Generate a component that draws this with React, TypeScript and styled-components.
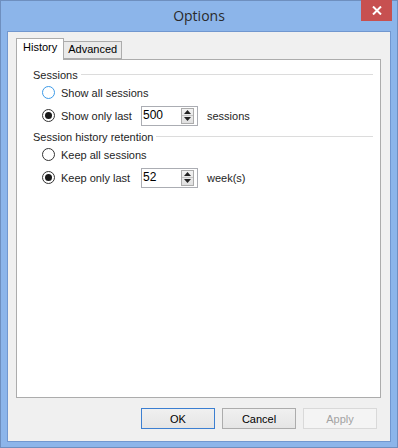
import styled, { createGlobalStyle } from 'styled-components';

const GlobalStyle = createGlobalStyle`
  html, body {
    margin: 0;
    padding: 0;
    background: #8cb5ea;
  }
  * {
    box-sizing: border-box;
  }
`;

const Window = styled.div`
  width: 398px;
  height: 448px;
  background: #8cb5ea;
  border: 1px solid #6e8fbf;
  display: flex;
  flex-direction: column;
  padding: 0 6px 5px 6px;
  font-family: 'Liberation Sans', Arial, sans-serif;
  font-size: 11px;
  color: #1e1e1e;
`;

const TitleBar = styled.div`
  height: 30px;
  display: flex;
  align-items: center;
  justify-content: center;
  position: relative;
`;

const Title = styled.div`
  font-family: 'Open Sans', 'Noto Sans', sans-serif;
  font-size: 14px;
  color: #2a2a2a;
  margin-top: -1px;
`;

const CloseButton = styled.div`
  position: absolute;
  top: -1px;
  right: -1px;
  width: 31px;
  height: 21px;
  background: #c75050;
  display: flex;
  align-items: center;
  justify-content: center;
`;

const Client = styled.div`
  flex: 1;
  background: #f0f0f0;
  border: 1px solid #7197cf;
  display: flex;
  flex-direction: column;
  padding: 6px 9px 0 8px;
`;

const TabStrip = styled.div`
  display: flex;
  align-items: flex-end;
  height: 21px;
  position: relative;
  z-index: 1;
`;

const Tab = styled.div<{ $active?: boolean }>`
  height: ${({ $active }) => ($active ? '22px' : '18px')};
  padding: ${({ $active }) => ($active ? '2px 6px 0 6px' : '1px 4px 0 4px')};
  margin-bottom: ${({ $active }) => ($active ? '-1px' : '0')};
  background: ${({ $active }) => ($active ? '#ffffff' : '#eaeaea')};
  border: 1px solid #acacac;
  border-bottom: ${({ $active }) => ($active ? 'none' : '1px solid #acacac')};
  border-left: ${({ $active }) => ($active ? '1px solid #acacac' : 'none')};
  display: flex;
  align-items: flex-start;
  color: #000;
`;

const Panel = styled.div`
  height: 339px;
  background: #ffffff;
  border: 1px solid #acacac;
  padding: 7px 7px 0 16px;
  display: flex;
  flex-direction: column;
`;

const Group = styled.div`
  display: flex;
  flex-direction: column;
  margin-bottom: 1px;
`;

const GroupHeader = styled.div`
  display: flex;
  align-items: center;
  gap: 3px;
  height: 15px;
`;

const GroupLine = styled.div`
  flex: 1;
  height: 1px;
  background: #dcdcdc;
`;

const Row = styled.div<{ $h: number }>`
  display: flex;
  align-items: center;
  height: ${({ $h }) => $h}px;
  padding-left: 9px;
`;

const Radio = styled.div<{ $checked?: boolean; $focus?: boolean }>`
  width: 13px;
  height: 13px;
  border-radius: 50%;
  border: 1px solid ${({ $focus }) => ($focus ? '#3c9ae8' : '#333333')};
  background: #ffffff;
  display: flex;
  align-items: center;
  justify-content: center;
  margin-right: 6px;
  flex-shrink: 0;

  &::after {
    content: '';
    display: ${({ $checked }) => ($checked ? 'block' : 'none')};
    width: 7px;
    height: 7px;
    border-radius: 50%;
    background: #1a1a1a;
  }
`;

const RadioLabel = styled.span`
  width: 80px;
  white-space: nowrap;
`;

const SpinBox = styled.div`
  width: 57px;
  height: 20px;
  border: 1px solid #abadb3;
  background: #fff;
  display: flex;
  align-items: stretch;
  padding: 1px 3px 1px 1px;
  margin-right: 9px;
`;

const SpinValue = styled.div`
  flex: 1;
  font-size: 12px;
  line-height: 15px;
  color: #000;
`;

const SpinButtons = styled.div`
  width: 13px;
  display: flex;
  flex-direction: column;
  border: 1px solid #acacac;
  background: linear-gradient(#f2f2f2, #e0e0e0);
`;

const SpinHalf = styled.div<{ $top?: boolean }>`
  flex: 1;
  display: flex;
  align-items: center;
  justify-content: center;
  border-bottom: ${({ $top }) => ($top ? '1px solid #c4c4c4' : 'none')};
`;

const Unit = styled.span`
  color: #1e1e1e;
`;

const Footer = styled.div`
  display: flex;
  justify-content: flex-end;
  gap: 7px;
  padding: 10px 4px 0 0;
`;

const Button = styled.div<{ $variant?: 'default' | 'disabled' }>`
  width: 74px;
  height: 21px;
  display: flex;
  align-items: center;
  justify-content: center;
  border: 1px solid
    ${({ $variant }) =>
      $variant === 'default' ? '#3c7fd1' : $variant === 'disabled' ? '#d9d9d9' : '#acacac'};
  background: ${({ $variant }) =>
    $variant === 'disabled' ? '#f4f4f4' : 'linear-gradient(#f0f0f0, #e5e5e5)'};
  color: ${({ $variant }) => ($variant === 'disabled' ? '#a3a3a3' : '#000')};
`;

const Arrow = ({ up }: { up?: boolean }) => (
  <svg width="7" height="4" viewBox="0 0 7 4">
    <path d={up ? 'M0 4 L3.5 0 L7 4 Z' : 'M0 0 L3.5 4 L7 0 Z'} fill="#222" />
  </svg>
);

const Spinner = ({ value }: { value: string }) => (
  <SpinBox>
    <SpinValue>{value}</SpinValue>
    <SpinButtons>
      <SpinHalf $top>
        <Arrow up />
      </SpinHalf>
      <SpinHalf>
        <Arrow />
      </SpinHalf>
    </SpinButtons>
  </SpinBox>
);

export default function App() {
  return (
    <>
      <GlobalStyle />
      <Window>
        <TitleBar>
          <Title>Options</Title>
          <CloseButton>
            <svg width="10" height="9" viewBox="0 0 10 9">
              <path d="M1 0.5 L9 8.5 M9 0.5 L1 8.5" stroke="#fff" strokeWidth="2" />
            </svg>
          </CloseButton>
        </TitleBar>
        <Client>
          <TabStrip>
            <Tab $active>History</Tab>
            <Tab>Advanced</Tab>
          </TabStrip>
          <Panel>
            <Group>
              <GroupHeader>
                <span>Sessions</span>
                <GroupLine />
              </GroupHeader>
              <Row $h={21}>
                <Radio $focus />
                <span>Show all sessions</span>
              </Row>
              <Row $h={25}>
                <Radio $checked />
                <RadioLabel>Show only last</RadioLabel>
                <Spinner value="500" />
                <Unit>sessions</Unit>
              </Row>
            </Group>
            <Group>
              <GroupHeader>
                <span>Session history retention</span>
                <GroupLine />
              </GroupHeader>
              <Row $h={21}>
                <Radio />
                <span>Keep all sessions</span>
              </Row>
              <Row $h={25}>
                <Radio $checked />
                <RadioLabel>Keep only last</RadioLabel>
                <Spinner value="52" />
                <Unit>week(s)</Unit>
              </Row>
            </Group>
          </Panel>
          <Footer>
            <Button $variant="default">OK</Button>
            <Button>Cancel</Button>
            <Button $variant="disabled">Apply</Button>
          </Footer>
        </Client>
      </Window>
    </>
  );
}
